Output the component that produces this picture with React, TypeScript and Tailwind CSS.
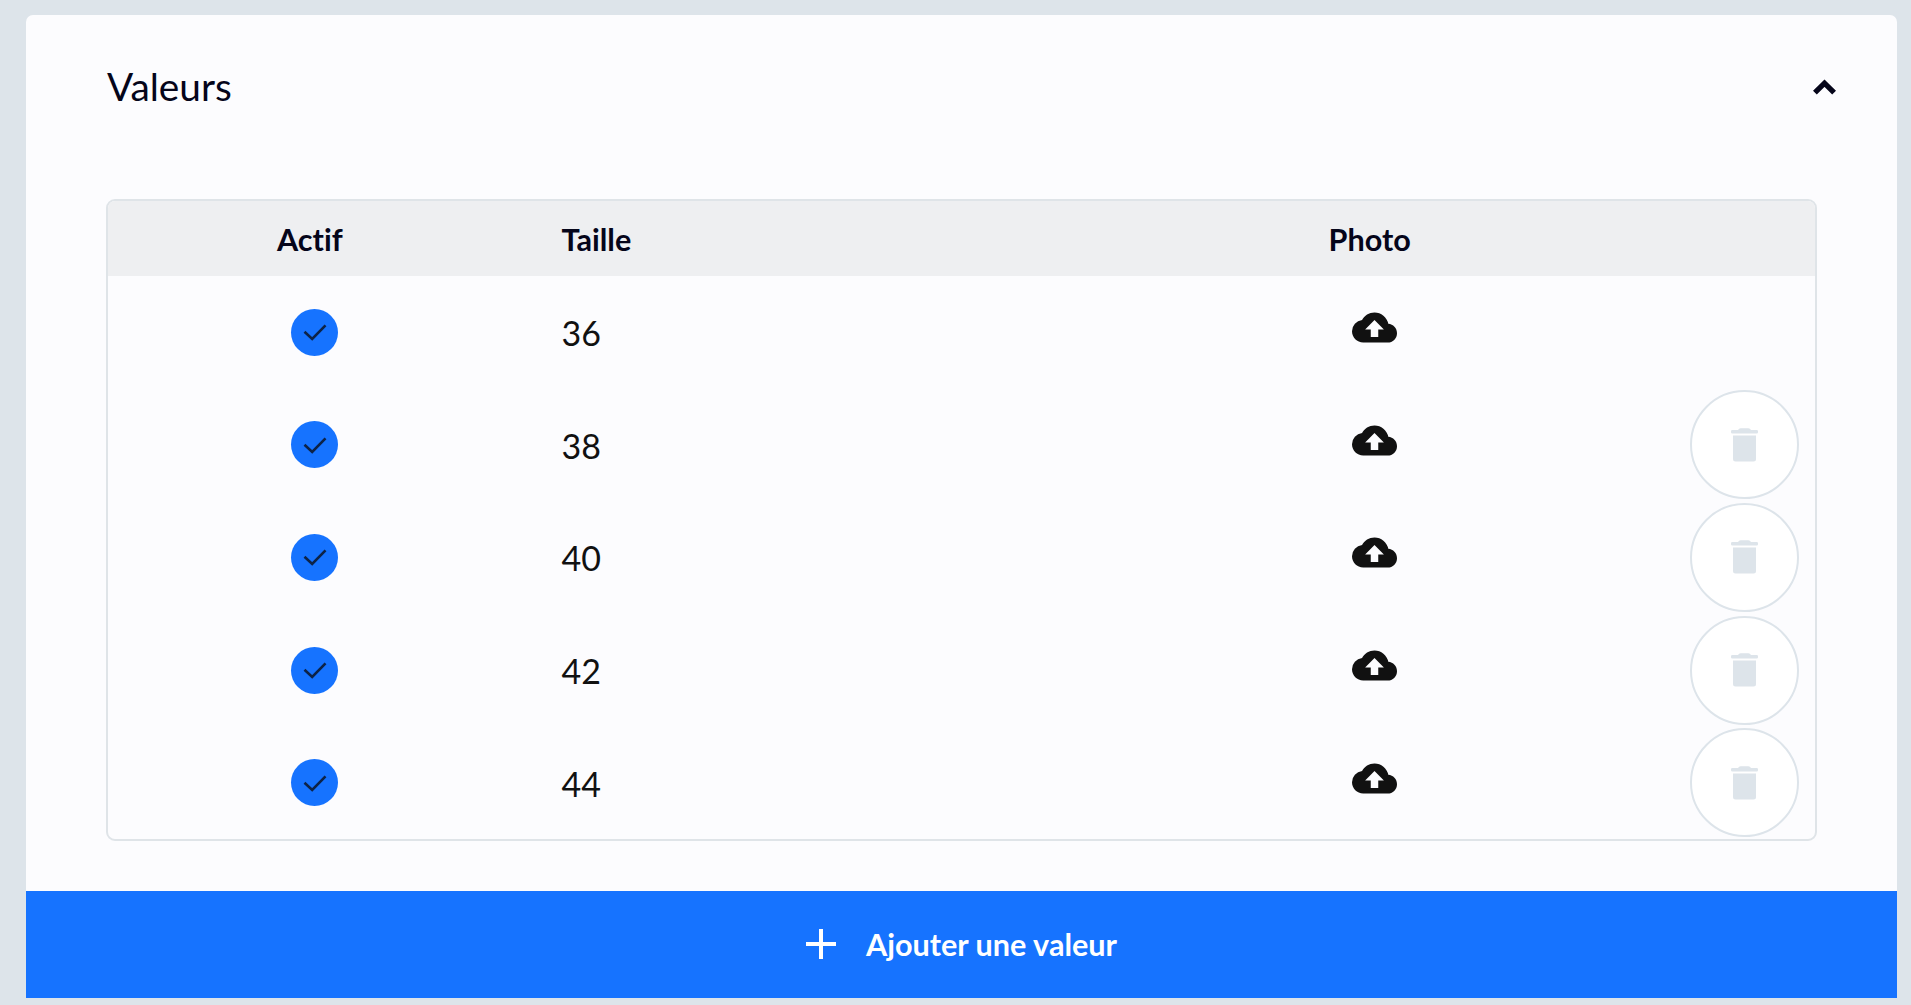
import { useState } from "react";
import { MdCloudUpload } from "react-icons/md";

type SizeValue = { label: string; active: boolean; removable: boolean };

const INITIAL_VALUES: SizeValue[] = [
  { label: "36", active: true, removable: false },
  { label: "38", active: true, removable: true },
  { label: "40", active: true, removable: true },
  { label: "42", active: true, removable: true },
  { label: "44", active: true, removable: true },
];

export default function App() {
  const [values, setValues] = useState(INITIAL_VALUES);
  const [open, setOpen] = useState(true);

  const toggle = (label: string) =>
    setValues((vs) => vs.map((v) => (v.label === label ? { ...v, active: !v.active } : v)));
  const remove = (label: string) => setValues((vs) => vs.filter((v) => v.label !== label));
  const add = () =>
    setValues((vs) => [...vs, { label: String(36 + vs.length * 2), active: true, removable: true }]);

  return (
    <main className="min-h-screen bg-[#dde4ea] pt-[15px] pr-[14px] pb-[7px] pl-[26px] font-['Lato',sans-serif] text-[#05051a] [font-variant-ligatures:none]">
      <section className="overflow-hidden rounded-t-[7px] bg-[#fcfcfe]">
        <header className="flex h-[184px] items-start justify-between pt-[47px] pr-[61px] pl-[81px]">
          <h2 className="text-[38.8px] leading-[48px]">Valeurs</h2>
          <button type="button" aria-label="Replier" onClick={() => setOpen(!open)} className="mt-[17px]">
            <ChevronIcon />
          </button>
        </header>

        {open && (
          <div className="mr-[80px] mb-[50px] ml-[80px] overflow-hidden rounded-[9px] border-2 border-[#dfe4e8]">
            <div className="grid h-[75px] grid-cols-[453.5px_635px_1fr_125px] items-center bg-[#eeeff1] pt-[2px] text-[30.6px] leading-[40px] font-bold">
              <span className="pl-[169px]">Actif</span>
              <span>Taille</span>
              <span className="pl-[132px]">Photo</span>
            </div>
            {values.map((v) => (
              <ValueRow key={v.label} value={v} onToggle={() => toggle(v.label)} onRemove={() => remove(v.label)} />
            ))}
          </div>
        )}

        <button
          type="button"
          onClick={add}
          className="flex h-[107px] w-full items-center justify-center gap-[30px] bg-[#1673ff] text-[30.6px] font-bold text-white"
        >
          <PlusIcon />
          Ajouter une valeur
        </button>
      </section>
    </main>
  );
}

function ValueRow({ value, onToggle, onRemove }: { value: SizeValue; onToggle: () => void; onRemove: () => void }) {
  return (
    <div className="grid h-[112.6px] grid-cols-[453.5px_634.5px_1fr_125px] items-center">
      <button
        type="button"
        aria-label="Actif"
        onClick={onToggle}
        className="ml-[183px] flex size-[47px] items-center justify-center rounded-full bg-[#1673ff]"
      >
        {value.active && <CheckIcon />}
      </button>
      <span className="pt-[2px] text-[34px] leading-[42px] text-[#111]">{value.label}</span>
      <MdCloudUpload className="mb-[9px] ml-[156px] size-[45px] text-[#111]" />
      {value.removable && (
        <button
          type="button"
          aria-label="Supprimer"
          onClick={onRemove}
          className="flex size-[109px] items-center justify-center rounded-full border-2 border-[#dde4ea] bg-white"
        >
          <TrashIcon />
        </button>
      )}
    </div>
  );
}

function ChevronIcon() {
  return (
    <svg width="23" height="16" viewBox="0 0 23 16" fill="none" stroke="currentColor" strokeWidth="5.4">
      <path d="M1.9 13.7 11.5 4.2l9.6 9.5" />
    </svg>
  );
}

function CheckIcon() {
  return (
    <svg width="24" height="18" viewBox="0 0 24 18" fill="none" stroke="#0d2347" strokeWidth="2.6">
      <path d="M1.5 8.7 9.2 16 22.5 2.3" />
    </svg>
  );
}

function PlusIcon() {
  return (
    <svg width="30" height="30" viewBox="0 0 30 30" fill="none" stroke="currentColor" strokeWidth="4">
      <path d="M15 0v30M0 15h30" />
    </svg>
  );
}

function TrashIcon() {
  return (
    <svg width="27" height="34" viewBox="0 0 27 34" fill="#dde4ea">
      <path d="M1.3 2H7q1-1.8 2.5-1.8h8q1.5 0 2.5 1.8h5.7q1.3 0 1.3 1.3v1q0 1.2-1.3 1.2H1.3Q0 5.5 0 4.3v-1Q0 2 1.3 2Z" />
      <path d="M2 7.5h23v23.5q0 2.500-2.500 2.500H4.500q-2.500 0-2.500-2.500Z" />
    </svg>
  );
}
